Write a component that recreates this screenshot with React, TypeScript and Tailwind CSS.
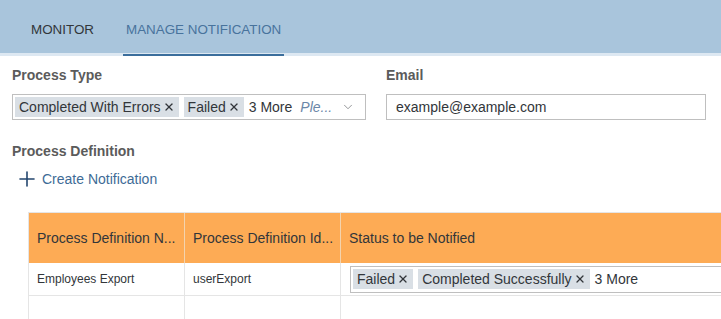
import { X, ChevronDown, Plus } from 'lucide-react'

function Token({ label }: { label: string }) {
  return (
    <span className="flex items-center h-[20px] px-[4px] gap-[2px] bg-[#d9dfe5] text-[#32363a] whitespace-nowrap">
      {label}
      <X size={12} strokeWidth={2.6} className="text-[#32363a]" />
    </span>
  )
}

export default function App() {
  return (
    <div className="w-[721px] h-[319px] overflow-hidden bg-white text-[14px] text-[#32363a]" style={{ fontFamily: '"Liberation Sans", Arial, sans-serif' }}>
      {/* tabs */}
      <div className="h-[56px] bg-[#a9c5dc] flex items-end border-b-[3px] border-[#dde8f2]">
        <div className="flex pl-[31px] whitespace-nowrap text-[13.4px]">
          <div className="h-[53px] flex items-center pt-[8px] text-[#32363a]">MONITOR</div>
          <div className="relative px-[3px] ml-[29px] h-[53px] flex items-center pt-[8px] text-[#48739c]">
            MANAGE NOTIFICATION
            <div className="absolute left-0 right-0 bottom-[-3px] h-[2px] bg-[#3b6e9c]" />
          </div>
        </div>
      </div>

      {/* filters */}
      <div className="flex px-[12px] pt-[10px] gap-[20px]">
        <div className="w-[354px]">
          <div className="font-bold text-[#5b5b5b] h-[18px] leading-[18px]">Process Type</div>
          <div className="mt-[10px] h-[26px] border border-[#bfbfbf] flex items-center pl-[2px] pr-[10px] gap-[5px]">
            <Token label="Completed With Errors" />
            <Token label="Failed" />
            <span className="whitespace-nowrap">3 More</span>
            <span className="italic text-[#6b87a8] ml-[3px]">Ple...</span>
            <ChevronDown size={14} strokeWidth={1.2} className="ml-auto text-[#6a6d70]" />
          </div>
        </div>
        <div className="w-[320px]">
          <div className="font-bold text-[#5b5b5b] h-[18px] leading-[18px]">Email</div>
          <div className="mt-[10px] h-[26px] border border-[#bfbfbf] flex items-center px-[9px]">
            example@example.com
          </div>
        </div>
      </div>

      <div className="px-[12px] mt-[22px] font-bold text-[#5b5b5b] h-[18px] leading-[18px]">Process Definition</div>
      <div className="flex items-center pl-[15px] mt-[10px] h-[18px] gap-[3px] text-[#3e6b96]">
        <Plus size={24} strokeWidth={1.6} className="text-[#23466e]" />
        <span>Create Notification</span>
      </div>

      {/* table */}
      <div className="ml-[28px] mt-[24px] border-l border-t border-[#e5e5e5]">
        <div className="flex h-[50px] bg-[#fdab55] text-[#32363a]">
          <div className="w-[156px] border-r border-[#f3d3ae] flex items-center px-[8px] whitespace-nowrap overflow-hidden">Process Definition N...</div>
          <div className="w-[156px] border-r border-[#f3d3ae] flex items-center px-[8px] whitespace-nowrap overflow-hidden">Process Definition Id...</div>
          <div className="flex-1 flex items-center px-[8px]">Status to be Notified</div>
        </div>
        <div className="flex h-[33px] border-b border-[#e5e5e5]">
          <div className="w-[156px] border-r border-[#e5e5e5] flex items-center px-[8px] text-[12px]">Employees Export</div>
          <div className="w-[156px] border-r border-[#e5e5e5] flex items-center px-[8px] text-[12px]">userExport</div>
          <div className="flex-1 flex items-center pl-[9px]">
            <div className="w-full h-[27px] border border-[#bfbfbf] border-r-0 flex items-center pl-[2px] gap-[5px]">
              <Token label="Failed" />
              <Token label="Completed Successfully" />
              <span className="whitespace-nowrap">3 More</span>
            </div>
          </div>
        </div>
        <div className="flex h-[30px]">
          <div className="w-[156px] border-r border-[#e5e5e5]" />
          <div className="w-[156px] border-r border-[#e5e5e5]" />
          <div className="flex-1" />
        </div>
      </div>
    </div>
  )
}
